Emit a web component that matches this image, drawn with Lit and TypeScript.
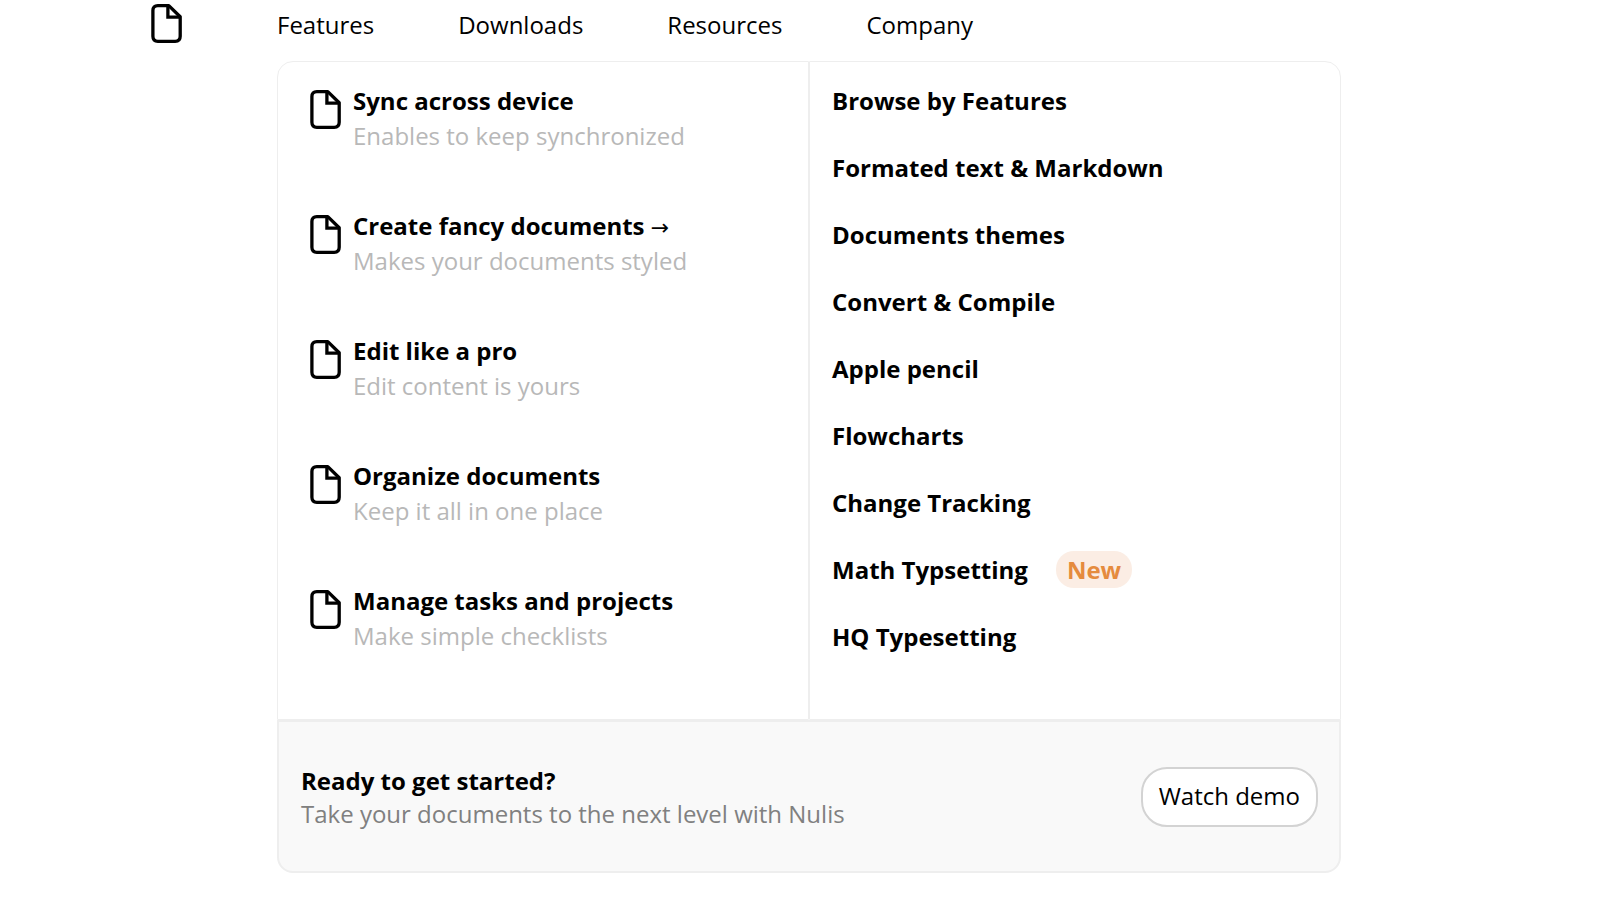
import { LitElement, html, css, svg } from "lit";
import { customElement } from "lit/decorators.js";

interface Feature {
  title: string;
  text: string;
  arrow?: boolean;
}

interface Topic {
  label: string;
  isNew?: boolean;
}

const NAV = ["Features", "Downloads", "Resources", "Company"];

const FEATURES: Feature[] = [
  { title: "Sync across device", text: "Enables to keep synchronized" },
  { title: "Create fancy documents", text: "Makes your documents styled", arrow: true },
  { title: "Edit like a pro", text: "Edit content is yours" },
  { title: "Organize documents", text: "Keep it all in one place" },
  { title: "Manage tasks and projects", text: "Make simple checklists" },
];

const TOPICS: Topic[] = [
  { label: "Browse by Features" },
  { label: "Formated text & Markdown" },
  { label: "Documents themes" },
  { label: "Convert & Compile" },
  { label: "Apple pencil" },
  { label: "Flowcharts" },
  { label: "Change Tracking" },
  { label: "Math Typsetting", isNew: true },
  { label: "HQ Typesetting" },
];

@customElement("file-icon")
export class FileIcon extends LitElement {
  static styles = css`
    :host {
      display: block;
      flex: none;
      width: 31px;
      height: 39px;
    }
    .icon {
      display: block;
      width: 100%;
      height: 100%;
    }
  `;

  render() {
    return html`<svg class="icon" viewBox="0 0 31 39" fill="none" stroke="currentColor" stroke-width="3.3" aria-hidden="true">
      ${svg`<path d="M6.8 1.65H17.8L29.2 12.7V32.3Q29.2 37.3 24.2 37.3H6.8Q1.9 37.3 1.9 32.3V6.6Q1.9 1.65 6.8 1.65Z" stroke-linejoin="round" />
      <path d="M16.9 2V13.2H29" />`}
    </svg>`;
  }
}

@customElement("app-root")
export class AppRoot extends LitElement {
  static styles = css`
    :host {
      display: block;
      min-height: 100vh;
      background: #fff;
      color: #000;
      font-family: "Open Sans", "Noto Sans", sans-serif;
      font-size: 24px;
      line-height: 35px;
    }
    a {
      color: inherit;
      text-decoration: none;
    }
    ul {
      margin: 0;
      padding: 0;
      list-style: none;
    }
    h2,
    h3,
    p {
      margin: 0;
      font-size: inherit;
    }
    .page {
      display: grid;
      grid-template-columns: 277fr 1064fr 274fr;
    }
    .logo {
      justify-self: end;
      padding: 4px 95px 0 0;
    }
    .content {
      grid-column: 2;
    }
    .nav {
      display: flex;
      flex-wrap: wrap;
      gap: 0 84px;
      padding: 7px 0 19px;
    }
    .columns {
      display: grid;
      grid-template-columns: 1fr 1fr;
    }
    .panel {
      display: grid;
      border: 1px solid #eee;
      padding: 21px 22px 65px;
    }
    .panel-features {
      border-top-left-radius: 16px;
      padding-left: 32px;
    }
    .panel-topics {
      border-top-right-radius: 16px;
    }
    .features {
      display: grid;
      align-content: start;
      row-gap: 55px;
    }
    .feature {
      display: flex;
      gap: 12px;
    }
    .feature file-icon {
      margin-top: 7px;
    }
    .title {
      font-weight: 700;
    }
    .arrow {
      font-family: "DejaVu Sans", sans-serif;
      font-size: 22px;
      font-weight: 400;
      line-height: 1;
    }
    .muted {
      color: #b8b8b8;
    }
    .topics {
      display: grid;
      align-content: start;
      gap: 32px;
      font-weight: 700;
    }
    .topic {
      display: flex;
      align-items: center;
      gap: 28px;
      height: 35px;
    }
    .badge {
      padding: 1px 11px;
      border-radius: 18px;
      background: #fbede4;
      color: #e58b3e;
    }
    .footer {
      display: flex;
      align-items: center;
      justify-content: space-between;
      gap: 22px;
      padding: 42px 21px 41px 22px;
      border: 2px solid #eee;
      border-radius: 0 0 16px 16px;
      background: #f9f9f9;
      line-height: 33px;
    }
    .lead {
      color: #808080;
    }
    .demo {
      padding: 9px 16px 12px;
      border: 2px solid #d3d3d3;
      border-radius: 26px;
      background: #fff;
      color: #000;
      font: inherit;
      line-height: 35px;
      cursor: pointer;
    }
  `;

  render() {
    return html`
      <div class="page">
        <a class="logo" href="#" aria-label="Home"><file-icon></file-icon></a>
        <div class="content">
          <nav>
            <ul class="nav">
              ${NAV.map((item) => html`<li><a href="#">${item}</a></li>`)}
            </ul>
          </nav>
          <div class="columns">
            <section class="panel panel-features">
              <ul class="features">
                ${FEATURES.map(
                  (f) => html`<li>
                    <a class="feature" href="#">
                      <file-icon></file-icon>
                      <div>
                        <h3 class="title">${f.title}${f.arrow ? html` <span class="arrow">→</span>` : ""}</h3>
                        <p class="muted">${f.text}</p>
                      </div>
                    </a>
                  </li>`
                )}
              </ul>
            </section>
            <section class="panel panel-topics">
              <ul class="topics">
                ${TOPICS.map(
                  (t) => html`<li class="topic">
                    <a href="#">${t.label}</a>${t.isNew ? html`<span class="badge">New</span>` : ""}
                  </li>`
                )}
              </ul>
            </section>
          </div>
          <section class="footer">
            <div>
              <h2 class="title">Ready to get started?</h2>
              <p class="lead">Take your documents to the next level with Nulis</p>
            </div>
            <button class="demo" type="button">Watch demo</button>
          </section>
        </div>
      </div>
    `;
  }
}
